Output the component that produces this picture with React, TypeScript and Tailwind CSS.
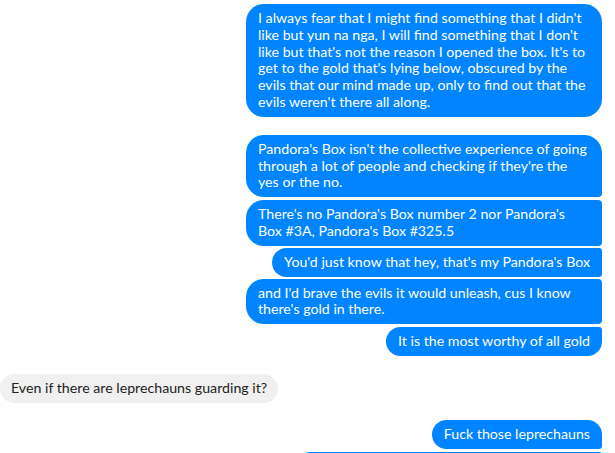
import React from "react";

type Msg = { text: string; mine: boolean; cls: string };

const messages: Msg[] = [
  {
    mine: true,
    cls: "mt-[4px] rounded-[18px]",
    text: "I always fear that I might find something that I didn't like but yun na nga, I will find something that I don't like but that's not the reason I opened the box. It's to get to the gold that's lying below, obscured by the evils that our mind made up, only to find out that the evils weren't there all along.",
  },
  {
    mine: true,
    cls: "mt-[18px] rounded-[18px] rounded-br-[4px]",
    text: "Pandora's Box isn't the collective experience of going through a lot of people and checking if they're the yes or the no.",
  },
  {
    mine: true,
    cls: "mt-[3px] rounded-[18px] rounded-r-[4px]",
    text: "There's no Pandora's Box number 2 nor Pandora's Box #3A, Pandora's Box #325.5",
  },
  {
    mine: true,
    cls: "mt-[2px] rounded-[18px] rounded-r-[4px]",
    text: "You'd just know that hey, that's my Pandora's Box",
  },
  {
    mine: true,
    cls: "mt-[2px] rounded-[18px] rounded-r-[4px]",
    text: "and I'd brave the evils it would unleash, cus I know there's gold in there.",
  },
  {
    mine: true,
    cls: "mt-[3px] rounded-[18px] rounded-tr-[4px]",
    text: "It is the most worthy of all gold",
  },
  {
    mine: false,
    cls: "mt-[18px] rounded-[18px]",
    text: "Even if there are leprechauns guarding it?",
  },
  {
    mine: true,
    cls: "mt-[17px] rounded-[18px] rounded-br-[4px]",
    text: "Fuck those leprechauns",
  },
];

export default function App() {
  return (
    <div className="h-[453px] w-[615px] overflow-hidden bg-white font-['Lato','Noto_Sans',sans-serif] text-[14.2px] leading-[16.8px]">
      <div className="flex flex-col pr-[13px]">
        {messages.map((m, i) => (
          <div key={i} className={m.mine ? "flex justify-end" : "flex justify-start"}>
            <div
              className={
                m.mine
                  ? `max-w-[356px] bg-[#0084ff] px-3 py-[6px] text-white ${m.cls}`
                  : `max-w-[356px] bg-[#f1f0f0] px-[11px] py-[6px] text-[#1c1e21] ${m.cls}`
              }
            >
              {m.text}
            </div>
          </div>
        ))}
        {/* next message, scrolled out of view */}
        <div className="flex justify-end">
          <div className="mt-[3px] h-[29px] w-[306px] rounded-[18px] rounded-r-[4px] bg-[#0084ff]" />
        </div>
      </div>
    </div>
  );
}
